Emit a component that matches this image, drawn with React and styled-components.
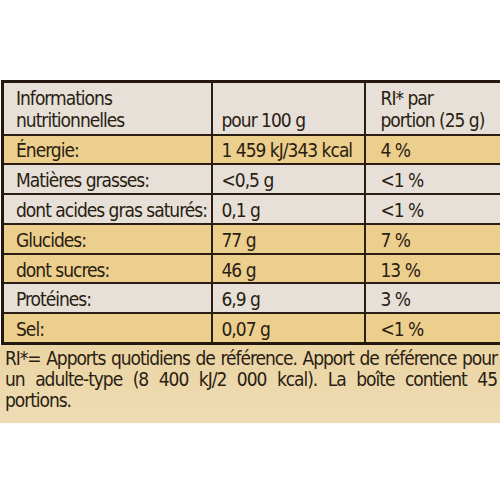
import styled, { createGlobalStyle } from "styled-components"

const Global = createGlobalStyle`
    body {
        margin: 0;
        background: #ffffff;
        font-family: "Liberation Sans Narrow", "DejaVu Sans Condensed", "Liberation Sans", sans-serif;
        color: #2a1d12;
    }
`

const Page = styled.div`
    width: 500px;
    height: 500px;
    padding-top: 80px;
    box-sizing: border-box;
    overflow: hidden;
`

const Table = styled.table`
    width: 504px;
    margin-left: 1px;
    border-collapse: collapse;
    border: 3px solid #24170d;
    table-layout: fixed;
`

const Col = styled.col`
    width: ${p => p.$w};
`

const Row = styled.tr`
    background: ${p => (p.$tone === "gold" ? "#ecce8d" : "#e6e0d8")};
    height: ${p => (p.$head ? "53px" : "29.8px")};
`

const Cell = styled.td`
    box-sizing: border-box;
    border: 2px solid #2b1d12;
    padding: 0 0 0 ${p => p.$pad || 12}px;
    font-size: 19px;
    letter-spacing: -1px;
    line-height: 22px;
    vertical-align: ${p => (p.$head ? "bottom" : "middle")};
    padding-bottom: ${p => (p.$head ? 3 : 0)}px;
    padding-top: ${p => (p.$head ? 0 : 2)}px;
    white-space: nowrap;
    overflow: hidden;
`

const Footer = styled.p`
    margin: 0;
    height: 78px;
    box-sizing: border-box;
    padding: 3px 3px 0 5px;
    background: linear-gradient(180deg, #ebd4a3, #eedcb4);
    font-size: 19px;
    letter-spacing: -1.05px;
    line-height: 21px;
    text-align: justify;
    text-align-last: left;
`

const rows = [
    ["Énergie:", "1 459 kJ/343 kcal", "4 %", "gold"],
    ["Matières grasses:", "<0,5 g", "<1 %", "light"],
    ["dont acides gras saturés:", "0,1 g", "<1 %", "light"],
    ["Glucides:", "77 g", "7 %", "gold"],
    ["dont sucres:", "46 g", "13 %", "gold"],
    ["Protéines:", "6,9 g", "3 %", "light"],
    ["Sel:", "0,07 g", "<1 %", "gold"],
]

const App = () => {
    return (
        <Page>
            <Global />
            <Table>
                <colgroup>
                    <Col $w="209px" />
                    <Col $w="153px" />
                    <Col $w="auto" />
                </colgroup>
                <tbody>
                    <Row $head>
                        <Cell $head>Informations<br />nutritionnelles</Cell>
                        <Cell $head $pad={9}>pour 100 g</Cell>
                        <Cell $head $pad={15}>RI* par<br />portion (25 g)</Cell>
                    </Row>
                    {rows.map(r => (
                        <Row key={r[0]} $tone={r[3]}>
                            <Cell>{r[0]}</Cell>
                            <Cell $pad={9}>{r[1]}</Cell>
                            <Cell $pad={15}>{r[2]}</Cell>
                        </Row>
                    ))}
                </tbody>
            </Table>
            <Footer>
                RI*= Apports quotidiens de référence. Apport de référence pour un adulte-type (8 400 kJ/2 000 kcal). La boîte contient 45 portions.
            </Footer>
        </Page>
    )
}

export default App
